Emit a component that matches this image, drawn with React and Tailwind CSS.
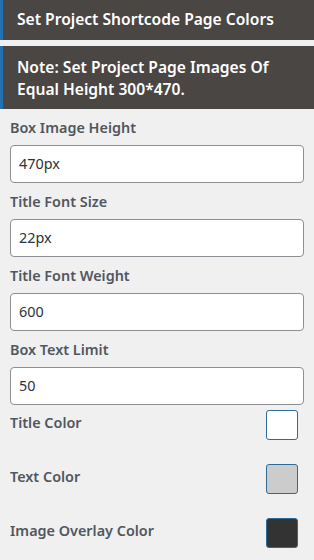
import React from 'react';

const fields = [
  { label: 'Box Image Height', value: '470px' },
  { label: 'Title Font Size', value: '22px' },
  { label: 'Title Font Weight', value: '600' },
  { label: 'Box Text Limit', value: '50' },
];

const colors = [
  { label: 'Title Color', fill: 'bg-white' },
  { label: 'Text Color', fill: 'bg-[#cccccc]' },
  { label: 'Image Overlay Color', fill: 'bg-[#333333]' },
];

export default function App() {
  return (
    <div className="w-[314px] h-[560px] bg-[#f0f0f0] overflow-hidden" style={{ fontFamily: '"Noto Sans", sans-serif' }}>
      <div className="h-[40px] bg-[#4a4644] border-l-[3px] border-[#2271b1] pl-[14px] flex items-center text-white text-[15.6px] font-semibold">
        Set Project Shortcode Page Colors
      </div>
      <div className="mt-[6px] h-[63px] bg-[#4a4644] border-l-[3px] border-[#2271b1] pl-[14px] pr-2 flex items-center text-white text-[15.6px] font-semibold leading-[22px]">
        <div>
          Note: Set Project Page Images Of
          <br />
          Equal Height 300*470.
        </div>
      </div>

      <div className="px-[10px] pt-[9px]">
        {fields.map((f) => (
          <div key={f.label} className="mb-[9px]">
            <div className="text-[14.4px] font-semibold text-[#50575e] leading-[20px] mb-[7px]">{f.label}</div>
            <div className="h-[38px] bg-white border border-[#8c8f94] rounded-[4px] flex items-center px-[8px] text-[14.4px] text-[#2c3338]">
              {f.value}
            </div>
          </div>
        ))}

        <div className="flex flex-col gap-[24px] -mt-[4px]">
          {colors.map((c) => (
            <div key={c.label} className="flex items-center justify-between pr-[6px]">
              <span className="text-[14.4px] font-semibold text-[#50575e] -mt-[4px]">{c.label}</span>
              <span className={`w-[32px] h-[30px] rounded-[3px] border border-[#2f6a99] ${c.fill}`} />
            </div>
          ))}
        </div>
      </div>
    </div>
  );
}
